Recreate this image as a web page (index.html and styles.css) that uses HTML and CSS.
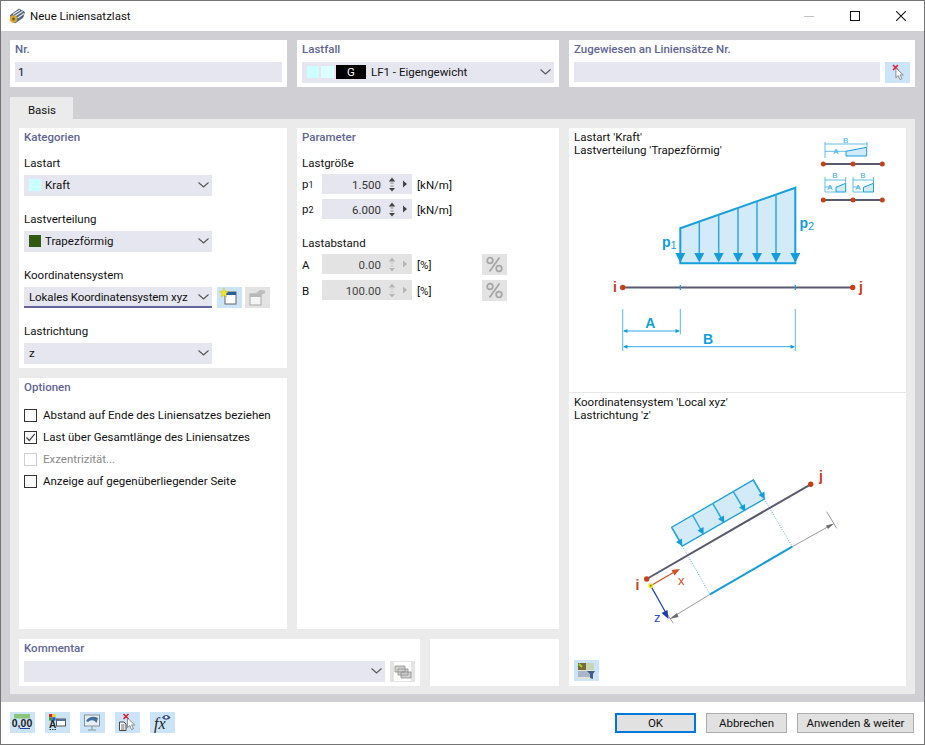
FILE: index.html
```html
<!DOCTYPE html>
<html lang="de">
<head>
<meta charset="utf-8">
<title>Neue Liniensatzlast</title>
<link rel="stylesheet" href="styles.css">
</head>
<body>
<svg class="defs" width="0" height="0" aria-hidden="true">
  <defs>
    <symbol id="chev" viewBox="0 0 11 6"><polyline points="0.5,0.5 5.5,5 10.5,0.5" fill="none" stroke="currentColor" stroke-width="1.1"/></symbol>
    <symbol id="spin" viewBox="0 0 22 20">
      <path d="M4 3.5 0.8 7.5H7.2Z M1 14H7L4 17.5Z" fill="currentColor"/>
      <path d="M2.5 9H5.5M2.5 12H5.5" stroke="currentColor" stroke-width="0.6"/>
      <path d="M15 6.500 19 10 15 13.500Z" fill="currentColor"/>
    </symbol>
    <symbol id="pct" viewBox="0 0 25 21">
      <circle cx="8" cy="6.500" r="2.800" fill="none" stroke="currentColor" stroke-width="1.800"/>
      <circle cx="17" cy="14.500" r="2.800" fill="none" stroke="currentColor" stroke-width="1.800"/>
      <path d="M17.500 3.500 7.500 17.500" stroke="currentColor" stroke-width="1.800"/>
    </symbol>
    <symbol id="cursor" viewBox="0 0 12 15">
      <path d="M1 1V11.500L3.600 9.200 5.500 13.500 7.500 12.600 5.600 8.500H9Z" fill="#fff" stroke="#777" stroke-width="0.9"/>
    </symbol>
  </defs>
</svg>
<div class="window">
  <header class="titlebar">
    <svg class="app-icon" viewBox="0 0 16 16" width="16" height="16">
      <path d="M1.500 7 10 1 15.500 4 14 9.500 6 15 2 13Z" fill="#566580" stroke="#3e4a60" stroke-width="0.600"/>
      <path d="M4 6.500 11 2M6 8 13.500 3.300M8.500 10 15 5.500" stroke="#e4e9f1" stroke-width="1.100"/>
      <circle cx="4.500" cy="11" r="3.700" fill="#d8a72e"/>
      <circle cx="4.500" cy="11" r="1.400" fill="#6b5a20"/>
    </svg>
    <span class="title-text">Neue Liniensatzlast</span>
    <div class="winctrls">
      <span class="wc"><svg width="10" height="10" viewBox="0 0 10 10"><path d="M0 5.500H10" stroke="#c4c4c4"/></svg></span>
      <span class="wc"><svg width="10" height="10" viewBox="0 0 10 10"><rect x="0.500" y="0.500" width="9" height="9" fill="none" stroke="#111"/></svg></span>
      <span class="wc"><svg width="10" height="10" viewBox="0 0 10 10"><path d="M0 0 10 10M10 0 0 10" stroke="#111" stroke-width="1.050"/></svg></span>
    </div>
  </header>

  <main class="client">
    <div class="top-row">
      <section class="panel top-panel">
        <h2 class="head">Nr.</h2>
        <div class="input">1</div>
      </section>
      <section class="panel top-panel">
        <h2 class="head">Lastfall</h2>
        <div class="combo">
          <span class="swatch sw-cyan"></span>
          <span class="swatch sw-cyan2"></span>
          <span class="lc-badge">G</span>
          <span class="combo-text lc-text">LF1 - Eigengewicht</span>
          <svg class="chev"><use href="#chev"/></svg>
        </div>
      </section>
      <section class="panel top-panel">
        <h2 class="head">Zugewiesen an Liniensätze Nr.</h2>
        <div class="with-btn">
          <div class="input grow"></div>
          <button class="tool" type="button">
            <svg width="25" height="21" viewBox="0 0 25 21"><path d="M8 3 13 8M13 3 8 8" stroke="#e2182d" stroke-width="1.500"/><use href="#cursor" x="10" y="5" width="11" height="14"/></svg>
          </button>
        </div>
      </section>
    </div>

    <nav class="tabs"><span class="tab">Basis</span></nav>

    <div class="tab-body">
      <section class="panel cats">
        <h2 class="head">Kategorien</h2>
        <div class="field">
          <label>Lastart</label>
          <div class="combo narrow"><span class="swatch sw-cyan"></span><span class="combo-text s-text">Kraft</span><svg class="chev"><use href="#chev"/></svg></div>
        </div>
        <div class="field">
          <label>Lastverteilung</label>
          <div class="combo narrow"><span class="swatch sw-green"></span><span class="combo-text s-text">Trapezförmig</span><svg class="chev"><use href="#chev"/></svg></div>
        </div>
        <div class="field">
          <label>Koordinatensystem</label>
          <div class="with-btn">
            <div class="combo narrow active"><span class="combo-text tight">Lokales Koordinatensystem xyz</span><svg class="chev"><use href="#chev"/></svg></div>
            <button class="tool" type="button">
              <svg width="25" height="21" viewBox="0 0 25 21"><rect x="8" y="5" width="11" height="12" fill="#fff" stroke="#666"/><rect x="8" y="5" width="11" height="3" fill="#2c5f9e"/><path d="M7 1 8.200 4.200 11.500 4.500 9 6.600 9.800 10 7 8.200 4.200 10 5 6.600 2.500 4.500 5.800 4.200Z" fill="#f3e62a" stroke="#c9b900" stroke-width="0.400"/></svg>
            </button>
            <button class="tool off" type="button">
              <svg width="25" height="21" viewBox="0 0 25 21"><rect x="5" y="7" width="11" height="11" fill="#f4f4f4" stroke="#a9a9a9"/><rect x="5" y="7" width="11" height="3" fill="#b8b8b8"/><path d="M11 6 15 3 20 3.500 20 6.500 16 7.500Z" fill="#bdbdbd"/></svg>
            </button>
          </div>
        </div>
        <div class="field">
          <label>Lastrichtung</label>
          <div class="combo narrow"><span class="combo-text">z</span><svg class="chev"><use href="#chev"/></svg></div>
        </div>
      </section>

      <section class="panel params">
        <h2 class="head">Parameter</h2>
        <h3 class="sub">Lastgröße</h3>
        <div class="prow"><span class="plabel">p<small>1</small></span><div class="spin"><span class="val">1.500</span><svg class="spin-ic"><use href="#spin"/></svg></div><span class="unit">[kN/m]</span></div>
        <div class="prow"><span class="plabel">p<small>2</small></span><div class="spin"><span class="val">6.000</span><svg class="spin-ic"><use href="#spin"/></svg></div><span class="unit">[kN/m]</span></div>
        <h3 class="sub sub2">Lastabstand</h3>
        <div class="prow"><span class="plabel">A</span><div class="spin dis"><span class="val">0.00</span><svg class="spin-ic"><use href="#spin"/></svg></div><span class="unit short">[%]</span><span class="pct"><svg width="25" height="21"><use href="#pct"/></svg></span></div>
        <div class="prow r2"><span class="plabel">B</span><div class="spin dis"><span class="val">100.00</span><svg class="spin-ic"><use href="#spin"/></svg></div><span class="unit short">[%]</span><span class="pct"><svg width="25" height="21"><use href="#pct"/></svg></span></div>
      </section>

      <section class="panel opts">
        <h2 class="head">Optionen</h2>
        <ul class="checks">
          <li><span class="cb"></span>Abstand auf Ende des Liniensatzes beziehen</li>
          <li><span class="cb"><svg width="11" height="11" viewBox="0 0 11 11"><path d="M1.500 5.500 4.300 8.500 9.800 1.800" fill="none" stroke="#444" stroke-width="1.200"/></svg></span>Last über Gesamtlänge des Liniensatzes</li>
          <li class="dis"><span class="cb"></span>Exzentrizität...</li>
          <li><span class="cb"></span>Anzeige auf gegenüberliegender Seite</li>
        </ul>
      </section>

      <div class="bottom-strip">
        <section class="panel comment">
          <h2 class="head">Kommentar</h2>
          <div class="with-btn">
            <div class="combo grow"><span class="combo-text"></span><svg class="chev"><use href="#chev"/></svg></div>
            <button class="tool off" type="button">
              <svg width="25" height="21" viewBox="0 0 25 21"><rect x="4" y="1" width="17" height="19" fill="#fff"/><path d="M5 5H15V11H5Z M8 8H18V14H8Z M11 11H21V17H11Z" fill="#d0d0d0" stroke="#8d8d8d" stroke-width="0.800"/></svg>
            </button>
          </div>
        </section>
        <section class="panel blank"></section>
      </div>

      <section class="panel figures">
        <div class="fig fig-top">
          <svg class="dgm" viewBox="569 128 337 264">
            <!-- thumbnail -->
            <g class="thin">
              <path class="load-fill" d="M846 151.300 866.700 147.300V156H846Z"/>
              <path d="M825 142V158M825 144H867M867 142V147M825 151.300H846" />
              <path class="load-fill" d="M836 187.300 845.700 183.300V192H836Z"/>
              <path class="load-fill" d="M863.500 187.300 873.500 183.300V192H863.500Z"/>
              <path d="M825 177V192H836M825 180H845.700M845.700 177V183M825 187H832"/>
              <path d="M853 177V192H863.500M853 180H873.500M873.500 177V183M853 187H860"/>
            </g>
            <text class="tiny" x="845.700" y="143">B</text>
            <text class="tiny" x="836" y="153.500">A</text>
            <text class="tiny" x="835" y="178">B</text>
            <text class="tiny" x="863" y="178">B</text>
            <text class="tiny" x="830" y="189.500">A</text>
            <text class="tiny" x="858" y="189.500">A</text>
            <path class="member m-s" d="M823.300 164H882.300M823.300 200H882.300"/>
            <g class="node"><circle cx="823.300" cy="164" r="2.500"/><circle cx="853" cy="164" r="2.500"/><circle cx="882.300" cy="164" r="2.500"/><circle cx="823.300" cy="200" r="2.500"/><circle cx="853" cy="200" r="2.500"/><circle cx="882.300" cy="200" r="2.500"/></g>

            <!-- load -->
            <path class="load-fill strong" d="M680.300 228.300 795.300 187.700V263.300H680.300Z"/>
            <path class="stem" d="M699.300 221.600V255M718.700 214.700V255M738 208V255M757 201.200V255M776 194.500V255"/>
            <path class="heads" d="M675.300 253H685.300L680.300 262.500ZM694.300 253H704.300L699.300 262.500ZM713.700 253H723.700L718.700 262.500ZM733 253H743L738 262.500ZM752 253H762L757 262.500ZM771 253H781L776 262.500ZM790.300 253H800.300L795.300 262.500Z"/>
            <text class="lbl" x="662" y="247">p<tspan class="sb" dy="2">1</tspan></text>
            <text class="lbl" x="799.500" y="228">p<tspan class="sb" dy="2">2</tspan></text>

            <!-- member -->
            <path class="member" d="M622.700 287.500H852.700"/>
            <path class="tick" d="M680.300 285V290M795.300 285V290"/>
            <circle class="node" cx="622.700" cy="287.500" r="2.700"/>
            <circle class="node" cx="852.700" cy="287.500" r="2.700"/>
            <text class="nlbl" x="613" y="292">i</text>
            <text class="nlbl" x="859" y="292">j</text>

            <!-- dimensions -->
            <path class="dim" d="M622.700 309V351M680.300 309V334.500M795.300 309V351"/>
            <path class="dim-line" d="M624 331H679M624 346.700H794"/>
            <path class="heads" d="M623 331 627.500 329V333ZM680 331 675.500 329V333ZM623 346.700 627.500 344.700V348.700ZM795 346.700 790.500 344.700V348.700Z"/>
            <text class="lbl mid" x="650.300" y="328">A</text>
            <text class="lbl mid" x="708" y="343.500">B</text>
          </svg>
          <p class="cap">Lastart 'Kraft'<br>Lastverteilung 'Trapezförmig'</p>
        </div>
        <div class="fig fig-bot">
          <svg class="dgm" viewBox="569 393 337 293">
            <path class="load-fill edge" d="M671.700 527.300 753.300 480 764.300 499 682.300 546Z"/>
            <path class="stem" d="M671.700 527.300 680 541.500M692.700 515.300 701 530M712.700 503.300 721.500 518.500M733.300 491.700 742.500 507M753.300 480 762 494.500"/>
            <path class="heads" d="M676 542 682.300 546 682 538.500ZM697.500 530.500 703.700 534.500 703.500 527ZM718 519 724.300 523 724 515.500ZM739 507.500 745.300 511.500 745 504ZM758.500 495 764.800 499 764.500 491.500Z"/>
            <path class="dots" d="M682.300 546 710 594.300M764.300 499 792.300 546.700"/>
            <path class="blue-thick" d="M710 594.300 792.300 546.700"/>
            <path class="gline" d="M672 617.500 710 594.300M792.300 546.700 832 524.500M826.700 511.700 836.700 528.300M666.700 613.300 673.300 623.300"/>
            <path class="gheads" d="M669.500 619 677 613 678.500 617ZM834 523.500 826 525.500 828 529Z"/>
            <path class="member" d="M646.700 579 810.700 484.300"/>
            <circle class="node" cx="646.700" cy="579" r="2.700"/>
            <circle class="node" cx="810.700" cy="484.300" r="2.700"/>
            <path class="ax-x" d="M650.700 585.700 676 571"/>
            <path class="ax-x-h" d="M680 569 671.500 570 674.500 575.500Z"/>
            <path class="ax-z" d="M650.700 585.700 666 613"/>
            <path class="ax-z-h" d="M668.500 619 661.500 613 667.500 610Z"/>
            <circle cx="650.700" cy="585.700" r="2.500" class="orig"/>
            <circle cx="650.700" cy="585.700" r="0.900" class="orig-c"/>
            <text class="nlbl" x="635.500" y="590">i</text>
            <text class="nlbl" x="819" y="481">j</text>
            <text class="axl ax-xt" x="678" y="585">x</text>
            <text class="axl ax-zt" x="654" y="622">z</text>
          </svg>
          <p class="cap">Koordinatensystem 'Local xyz'<br>Lastrichtung 'z'</p>
          <button class="tool fig-btn" type="button">
            <svg width="25" height="21" viewBox="0 0 25 21"><rect x="4" y="3" width="16" height="16" fill="#dfe3d8"/><rect x="4" y="3" width="8" height="7" fill="#7a6a3a"/><path d="M5 4 8 7" stroke="#8fdc2a" stroke-width="2"/><rect x="12" y="3" width="8" height="7" fill="#c8d6b5"/><rect x="4" y="11" width="12" height="6" fill="#a9b6cc"/><path d="M13 11H21L19 14V19L16 18V14Z" fill="#3f5f8f"/></svg>
          </button>
        </div>
      </section>
    </div>
  </main>

  <footer class="footer">
    <div class="foot-tools">
      <button class="tool" type="button">
        <svg width="25" height="21" viewBox="0 0 25 21"><rect x="4" y="2" width="16" height="4.500" fill="#8cc47a"/><text class="ft-num" x="12" y="15">0,00</text><path d="M10 16.500H20" stroke="#1f3f9e"/></svg>
      </button>
      <button class="tool" type="button">
        <svg width="25" height="21" viewBox="0 0 25 21"><rect x="4" y="2" width="3.300" height="3.300" fill="#d8241f"/><rect x="7.300" y="2" width="3.300" height="3.300" fill="#e8d51e"/><rect x="4" y="5.300" width="3.300" height="3.300" fill="#2e9e36"/><rect x="7.300" y="5.300" width="3.300" height="3.300" fill="#2a4fc9"/><text class="ft-a" x="7.500" y="16">A</text><path d="M4.500 17.500H6M7 17.500H8.500M9.500 17.500H11" stroke="#333"/><rect x="11.500" y="7" width="9" height="7" fill="#fff" stroke="#555"/><rect x="11.500" y="7" width="9" height="2" fill="#5b6f8e"/></svg>
      </button>
      <button class="tool" type="button">
        <svg width="25" height="21" viewBox="0 0 25 21"><rect x="4.500" y="3" width="15" height="11" fill="#e6eef5" stroke="#8a8f96"/><path d="M6 9C9 4 14 4 18 6L16.500 11C15 8 11 7 8 10Z" fill="#3f6f9e"/><path d="M12 14V17.500M8 18H16" stroke="#8a8f96"/></svg>
      </button>
      <button class="tool" type="button">
        <svg width="25" height="21" viewBox="0 0 25 21"><path d="M8.500 2 13.500 7M13.500 2 8.500 7" stroke="#e2182d" stroke-width="1.500"/><path d="M4.500 10H9L11 12V18.500H4.500Z" fill="#fff" stroke="#444"/><path d="M6 13H9.500M6 15H9.500M6 17H9.500" stroke="#444" stroke-width="0.800"/><use href="#cursor" x="11.500" y="5" width="11" height="14"/></svg>
      </button>
      <button class="tool" type="button">
        <svg width="25" height="21" viewBox="0 0 25 21"><text class="ft-fx" x="4" y="17">fx</text><path d="M12 5.500C14 2 18.500 2 20.500 5.500 18.500 8.500 14 8.500 12 5.500Z" fill="#3c4f8f"/><circle cx="16.200" cy="5.300" r="1.300" fill="#fff"/></svg>
      </button>
    </div>
    <div class="foot-btns">
      <button class="btn primary" type="button">OK</button>
      <button class="btn" type="button">Abbrechen</button>
      <button class="btn wide" type="button">Anwenden &amp; weiter</button>
    </div>
  </footer>
</div>
</body>
</html>
```
FILE: styles.css
```css
* { box-sizing: border-box; }
html, body { margin: 0; padding: 0; }
body {
  width: 925px;
  height: 745px;
  overflow: hidden;
  font: 11.500px/16px Roboto, "Noto Sans", sans-serif;
  color: #111;
  background: #fff;
}
.defs { position: absolute; }
.window {
  width: 925px;
  height: 745px;
  border: 1px solid #747474;
  display: flex;
  flex-direction: column;
}
h2, h3, p, ul { margin: 0; padding: 0; font: inherit; }

/* title bar */
.titlebar { height: 30px; display: flex; align-items: center; padding-left: 8px; background: #fff; flex: none; }
.app-icon { flex: none; }
.title-text { margin-left: 5px; }
.winctrls { margin-left: auto; display: flex; }
.wc { width: 46px; height: 30px; display: flex; align-items: center; justify-content: center; }

/* client */
.client { flex: none; height: 671px; background: #d0d0d4; padding: 9px 9px 8px; display: flex; flex-direction: column; }
.panel { background: #fff; }
.top-row { display: grid; grid-template-columns: 277px 262px 346px; gap: 10px; height: 47px; flex: none; }
.top-panel { padding: 1px 5px 0; }
.head { font-weight: 500; color: #5f6596; height: 16px; margin-bottom: 5px; }
.input { height: 20px; background: #e6e6f0; padding: 0 3px; line-height: 20px; }
.grow { flex: 1 1 auto; min-width: 0; }
.with-btn { display: flex; gap: 5px; align-items: flex-start; }
.with-btn .tool + .tool { margin-left: -2px; }
.tool {
  width: 25px; height: 21px; padding: 0; border: 0; background: #cce4f7; flex: none;
  display: block; font: inherit;
}
.tool svg { display: block; }
.tool.off { background: #e3e3e3; }

.combo {
  height: 21px; background: #e6e6f0; display: flex; align-items: center; padding: 0 3px 1px 5px;
}
.combo.narrow { width: 188px; flex: none; }
.combo.active { border-bottom: 2px solid #63659f; padding-bottom: 0; }
.combo-text { white-space: nowrap; }
.tight { letter-spacing: -0.1px; }
.s-text { margin-left: 4px; }
.lc-text { margin-left: 5px; }
.chev { width: 11px; height: 6px; margin-left: auto; color: #555; flex: none; }
.swatch { width: 12px; height: 12px; flex: none; }
.sw-cyan { background: #ccffff; }
.sw-cyan2 { background: #dcffff; margin-left: 2px; width: 13px; }
.sw-green { background: #2f5a10; }
.lc-badge { width: 30px; height: 14px; background: #000; color: #fff; text-align: center; line-height: 14px; margin-left: 2px; flex: none; }

/* tabs */
.tabs { margin-top: 10px; height: 22px; flex: none; display: flex; }
.tab { width: 63px; background: #ebebeb; text-align: center; line-height: 26px; padding-left: 1px; }
.tab-body {
  flex: none; height: 575px; background: #ebebeb; padding: 9px;
  display: grid; grid-template-columns: 268px 262px 337px; grid-template-rows: 240px 251px 47px; gap: 10px;
}
.cats { grid-column: 1; grid-row: 1; padding: 1px 5px 0; }
.params { grid-column: 2; grid-row: 1 / 3; padding: 1px 5px 0; }
.opts { grid-column: 1; grid-row: 2; padding: 1px 5px 0; }
.bottom-strip { grid-column: 1 / 3; grid-row: 3; display: flex; gap: 10px; }
.figures { grid-column: 3; grid-row: 1 / 4; display: flex; flex-direction: column; }
.comment { width: 401px; padding: 1px 5px 0; }
.blank { flex: 1; }
.cats .head { margin-bottom: 10px; }
.field { margin-bottom: 15px; }
.field label { display: block; height: 16px; margin-bottom: 4px; }

/* params */
.params .head { margin-bottom: 10px; }
.sub { height: 16px; margin-bottom: 3px; }
.sub2 { margin-top: 16px; margin-bottom: 3px; }
.prow { display: flex; align-items: center; height: 20px; margin-bottom: 5px; }
.prow.r2 { margin-top: 6px; }
.plabel { width: 20px; flex: none; padding-top: 1px; }
.plabel small { font-size: 9px; }
.spin { width: 90px; height: 20px; background: #e6e6f0; display: flex; align-items: center; flex: none; color: #333; }
.val { width: 59px; text-align: right; padding-top: 1px; }
.spin-ic { width: 22px; height: 20px; margin-left: 7px; color: #444; }
.spin.dis { background: #e3e3e3; }
.spin.dis .spin-ic { color: #b5b5b5; }
.spin.dis .val { color: #444; }
.unit { margin-left: 5px; width: 65px; flex: none; padding-top: 1px; }
.pct { width: 25px; height: 21px; background: #e3e3e3; color: #a6a6a6; flex: none; }
.pct svg { display: block; }

/* options */
.opts .head { margin-bottom: 6px; }
.checks { list-style: none; margin-top: 9px; }
.checks li { height: 22px; display: flex; align-items: center; white-space: nowrap; }
.cb { width: 13px; height: 13px; border: 1px solid #333; margin-right: 6px; flex: none; background: #fff; display: flex; align-items: center; justify-content: center; }
.checks .dis { color: #8a8a8a; }
.checks .dis .cb { border-color: #cfcfcf; }

/* figures */
.fig { display: grid; position: relative; }
.fig > * { grid-area: 1 / 1; }
.fig-top { height: 265px; border-bottom: 1px solid #e6e6e6; }
.fig-bot { flex: 1; }
.dgm { width: 337px; display: block; }
.fig-top .dgm { height: 264px; }
.fig-bot .dgm { height: 293px; }
.cap { padding: 3px 0 0 5px; line-height: 13px; justify-self: start; align-self: start; }
.fig-btn { justify-self: start; align-self: end; margin: 0 0 5px 5px; }

/* diagram */
.load-fill { fill: #d3eaf8; stroke: none; }
.load-fill.strong, .load-fill.edge { stroke: #159fdf; stroke-width: 2; }
.load-fill.edge { stroke-width: 1.300; }
.thin path:not(.load-fill) { fill: none; stroke: #39aee5; stroke-width: 0.800; }
.thin .load-fill { stroke: #159fdf; stroke-width: 1; }
.tiny { font: 8px "Liberation Sans", sans-serif; fill: #39aee5; text-anchor: middle; }
.member { stroke: #5a5a6e; stroke-width: 2; fill: none; }
.m-s { stroke-width: 1.800; }
.node { fill: #c8401a; }
.stem { stroke: #2fa9e4; stroke-width: 1.500; fill: none; }
.heads { fill: #129ddd; }
.tick { stroke: #159fdf; stroke-width: 1.200; }
.dim { stroke: #55b9e8; stroke-width: 1; fill: none; }
.dim-line { stroke: #2fa9e4; stroke-width: 1; fill: none; }
.lbl { font: 700 14px "Liberation Sans", sans-serif; fill: #129ddd; }
.lbl .sb { font-weight: 400; font-size: 11px; }
.mid { text-anchor: middle; }
.nlbl { font: 700 14px "Liberation Sans", sans-serif; fill: #c8401a; }
.dots { stroke: #4db7e8; stroke-width: 1; stroke-dasharray: 1 1.500; fill: none; }
.blue-thick { stroke: #129ddd; stroke-width: 2; }
.gline { stroke: #9a9aa2; stroke-width: 1; fill: none; }
.gheads { fill: #6c6c78; }
.ax-x { stroke: #d2501f; stroke-width: 1.300; }
.ax-x-h { fill: #d2501f; }
.ax-z { stroke: #1c3fb0; stroke-width: 1.300; }
.ax-z-h { fill: #1c3fb0; }
.orig { fill: #f4e20e; }
.orig-c { fill: #3c8c3c; }
.axl { font: 400 13px "Liberation Sans", sans-serif; }
.ax-xt { fill: #d2501f; }
.ax-zt { fill: #2a4fc0; }

/* footer */
.footer { flex: 1; display: flex; align-items: flex-start; padding: 10px 10px 0 9px; background: #fff; }
.foot-tools { display: flex; gap: 10px; }
.foot-btns { margin-left: auto; display: flex; gap: 10px; padding-top: 1px; }
.btn { width: 81px; height: 20px; padding: 0; font: inherit; line-height: 16px; color: #111; background: #e1e1e1; border: 1px solid #adadad; }
.btn.wide { width: 117px; }
.btn.primary { border: 2px solid #0078d7; }
.ft-num { font: 700 10.500px "Liberation Sans", sans-serif; fill: #222; text-anchor: middle; }
.ft-a { font: 700 10px "Liberation Sans", sans-serif; fill: #222; text-anchor: middle; }
.ft-fx { font: italic 16px "Liberation Serif", serif; fill: #222; }
```
